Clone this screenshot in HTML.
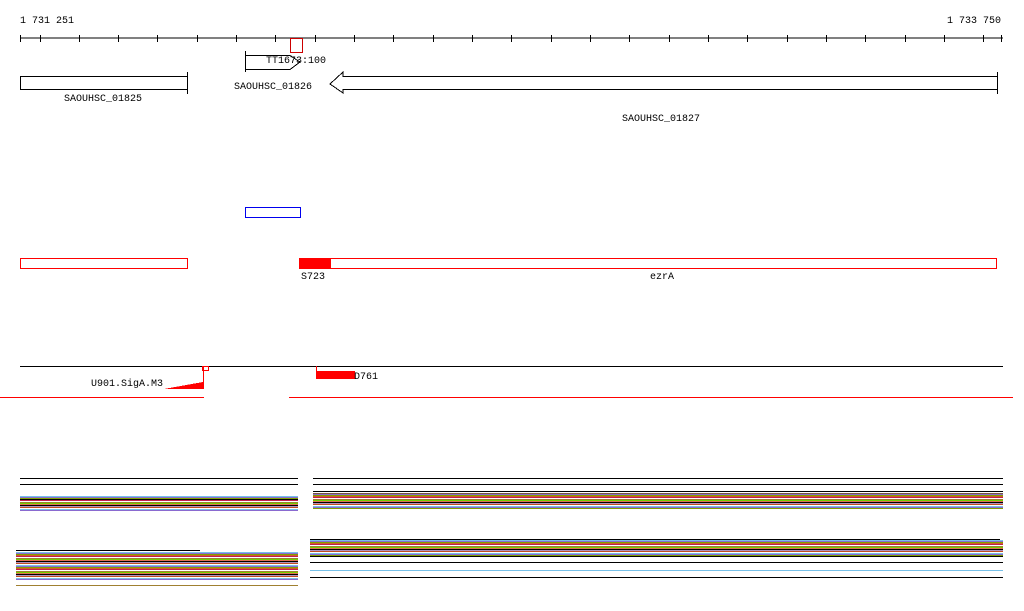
<!DOCTYPE html>
<html><head><meta charset="utf-8"><style>
body{margin:0;background:#fff;width:1024px;height:611px;overflow:hidden;position:relative}
svg{position:absolute;left:0;top:0}
svg text{font-family:"Liberation Mono",monospace;font-size:10px;fill:#000}
.b{position:absolute;background:repeating-linear-gradient(180deg,#76c0e8 0 1px,#8a6ad0 1px 2px,#80a000 2px 3px,#d06020 3px 4px,#c02050 4px 5px,#fff 5px 6px,#a08030 6px 7px,#70d000 7px 8px,#e07050 8px 9px,#000 9px 10px,#b090c0 10px 11px,#c05020 11px 12px,#fff 12px 13px)}
</style></head><body>
<div class="b" style="left:20px;top:496px;width:278px;height:15px"></div>
<div class="b" style="left:313px;top:493px;width:690px;height:16px"></div>
<div class="b" style="left:16px;top:552px;width:282px;height:28px"></div>
<div class="b" style="left:310px;top:540px;width:693px;height:17px"></div>
<svg width="1024" height="611" xmlns="http://www.w3.org/2000/svg" shape-rendering="crispEdges">
<text x="20" y="23">1 731 251</text>
<text x="947" y="23">1 733 750</text>
<line x1="20" y1="38" x2="1003" y2="38" stroke="#000"/>
<g stroke="#000">
<line x1="20.5" y1="35" x2="20.5" y2="42"/><line x1="40.5" y1="35" x2="40.5" y2="42"/><line x1="79.5" y1="35" x2="79.5" y2="42"/><line x1="118.5" y1="35" x2="118.5" y2="42"/><line x1="157.5" y1="35" x2="157.5" y2="42"/><line x1="197.5" y1="35" x2="197.5" y2="42"/><line x1="236.5" y1="35" x2="236.5" y2="42"/><line x1="275.5" y1="35" x2="275.5" y2="42"/><line x1="315.5" y1="35" x2="315.5" y2="42"/><line x1="354.5" y1="35" x2="354.5" y2="42"/><line x1="393.5" y1="35" x2="393.5" y2="42"/><line x1="433.5" y1="35" x2="433.5" y2="42"/><line x1="472.5" y1="35" x2="472.5" y2="42"/><line x1="511.5" y1="35" x2="511.5" y2="42"/><line x1="551.5" y1="35" x2="551.5" y2="42"/><line x1="590.5" y1="35" x2="590.5" y2="42"/><line x1="629.5" y1="35" x2="629.5" y2="42"/><line x1="669.5" y1="35" x2="669.5" y2="42"/><line x1="708.5" y1="35" x2="708.5" y2="42"/><line x1="747.5" y1="35" x2="747.5" y2="42"/><line x1="787.5" y1="35" x2="787.5" y2="42"/><line x1="826.5" y1="35" x2="826.5" y2="42"/><line x1="865.5" y1="35" x2="865.5" y2="42"/><line x1="905.5" y1="35" x2="905.5" y2="42"/><line x1="944.5" y1="35" x2="944.5" y2="42"/><line x1="983.5" y1="35" x2="983.5" y2="42"/><line x1="1001.5" y1="35" x2="1001.5" y2="42"/>
</g>
<rect x="290.5" y="38.5" width="12" height="14" fill="none" stroke="#c00"/>
<g fill="none" stroke="#000">
<line x1="245.5" y1="51" x2="245.5" y2="72"/>
<polyline points="245.5,55.5 290,55.5 300,62 290,69.5 245.5,69.5"/>
<line x1="187.5" y1="72" x2="187.5" y2="94"/>
<rect x="20.5" y="76.5" width="167" height="13"/>
<polygon points="997.5,76.5 343,76.5 343,72 330,84 343,93 343,89.5 997.5,89.5"/>
<line x1="997.5" y1="72" x2="997.5" y2="94"/>
</g>
<text x="266" y="63">TT1673:100</text>
<text x="234" y="89">SAOUHSC_01826</text>
<text x="64" y="101">SAOUHSC_01825</text>
<text x="622" y="121">SAOUHSC_01827</text>
<rect x="245.5" y="207.5" width="55" height="10" fill="none" stroke="#0000ee"/>
<rect x="20.5" y="258.5" width="167" height="10" fill="none" stroke="#f00"/>
<rect x="299.5" y="258.5" width="697" height="10" fill="none" stroke="#f00"/>
<rect x="299" y="258" width="32" height="11" fill="#f00"/>
<text x="301" y="279">S723</text>
<text x="650" y="279">ezrA</text>
<line x1="20" y1="366.5" x2="1003" y2="366.5" stroke="#000"/>
<rect x="202.5" y="366.5" width="6" height="4" fill="none" stroke="#f00"/>
<polygon points="164,389 203,382 203,389" fill="#f00"/>
<line x1="203.5" y1="367" x2="203.5" y2="389" stroke="#f00"/>
<line x1="316.5" y1="366" x2="316.5" y2="374" stroke="#f00"/>
<rect x="316" y="371" width="39" height="8" fill="#f00"/>
<text x="354" y="379">D761</text>
<text x="91" y="386">U901.SigA.M3</text>
<line x1="0" y1="397.5" x2="204" y2="397.5" stroke="#f00"/>
<line x1="289" y1="397.5" x2="1013" y2="397.5" stroke="#f00"/>
<g stroke-width="1">
<line x1="20" y1="478.5" x2="298" y2="478.5" stroke="#000"/><line x1="20" y1="484.5" x2="298" y2="484.5" stroke="#000"/>
<line x1="313" y1="478.5" x2="1003" y2="478.5" stroke="#000"/><line x1="313" y1="484.5" x2="1003" y2="484.5" stroke="#000"/>
<line x1="20" y1="499.5" x2="298" y2="499.5" stroke="#000"/>
<line x1="313" y1="493.5" x2="1003" y2="493.5" stroke="#7a5a40"/>
<line x1="313" y1="491.5" x2="1003" y2="491.5" stroke="#000"/>
<line x1="16" y1="550.5" x2="200" y2="550.5" stroke="#000"/>
<line x1="16" y1="585.5" x2="298" y2="585.5" stroke="#a08030"/>
<line x1="310" y1="539.5" x2="1000" y2="539.5" stroke="#000"/>
<line x1="310" y1="556.5" x2="1003" y2="556.5" stroke="#000"/>
<line x1="310" y1="562.5" x2="1003" y2="562.5" stroke="#000"/>
<line x1="310" y1="570.5" x2="1003" y2="570.5" stroke="#76c0e8"/>
<line x1="310" y1="577.5" x2="1003" y2="577.5" stroke="#000"/>
</g>
</svg>
</body></html>
